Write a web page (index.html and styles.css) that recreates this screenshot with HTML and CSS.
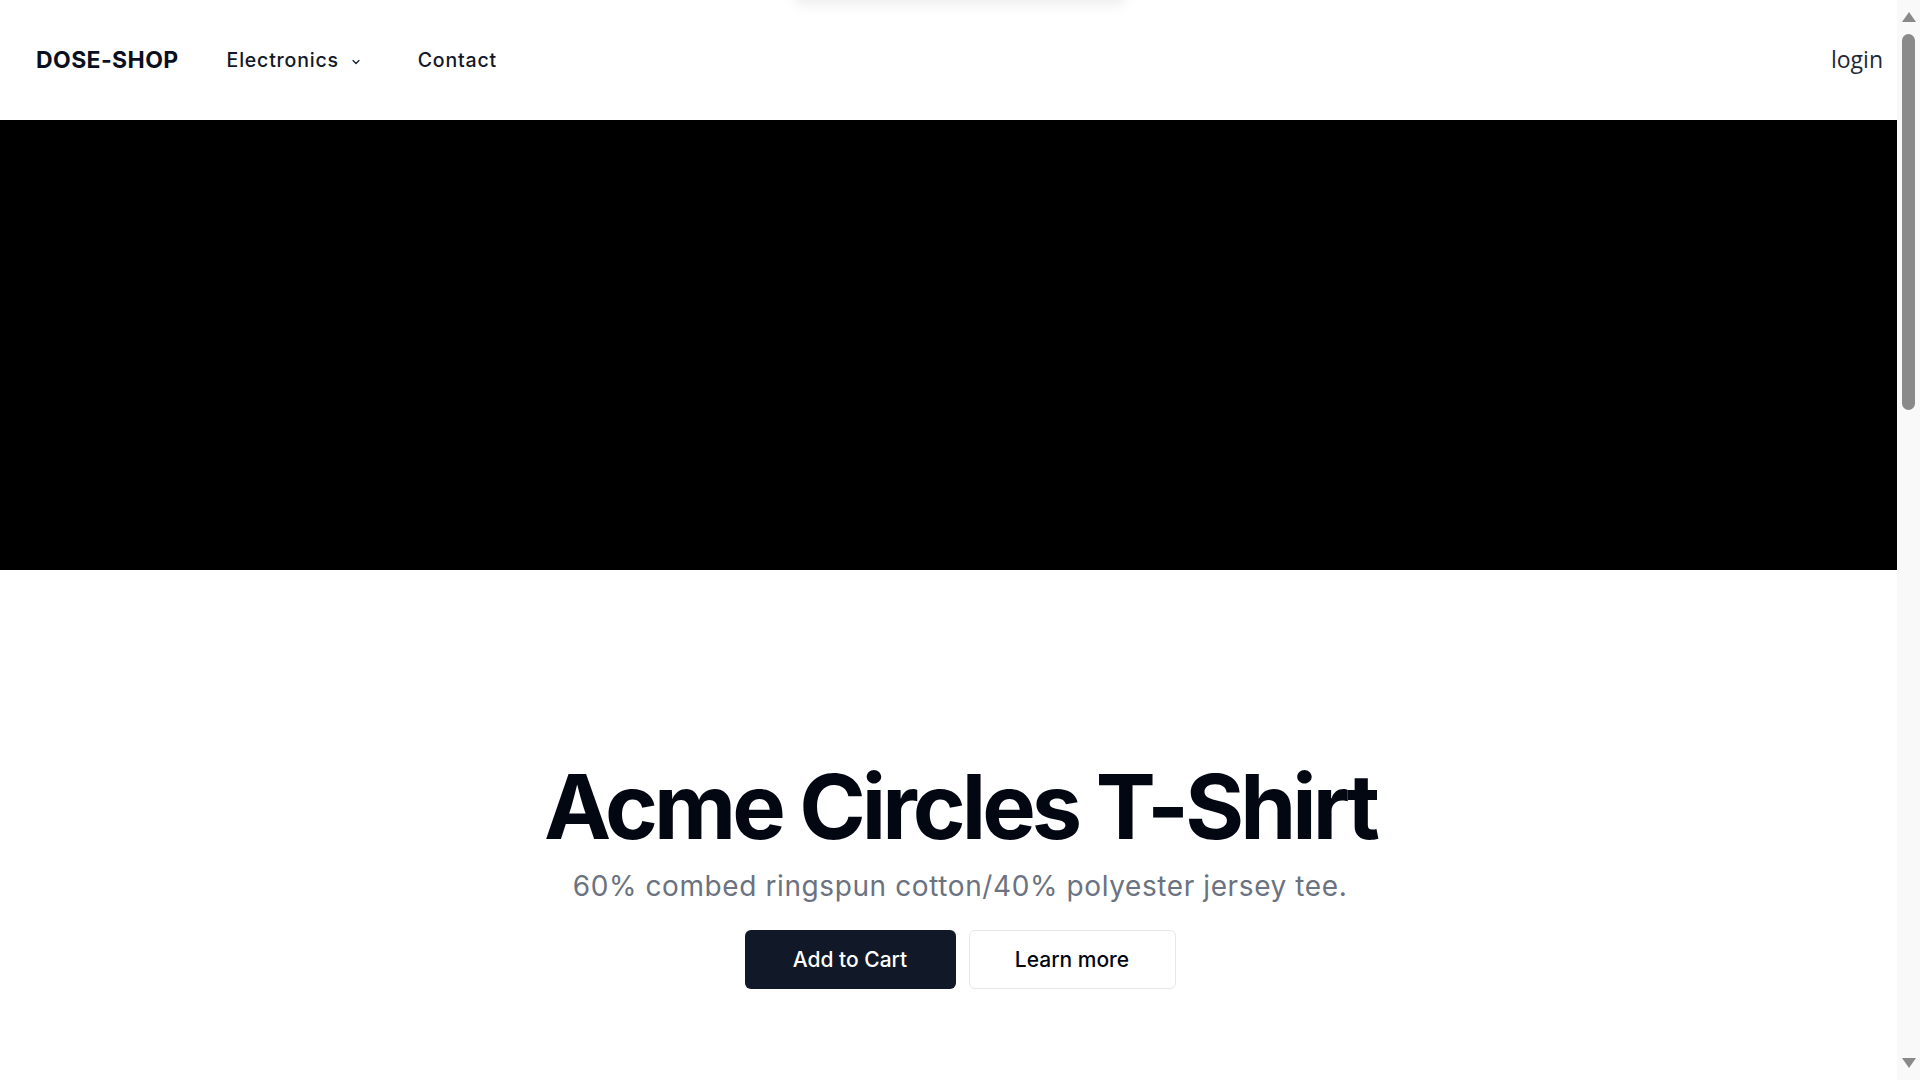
FILE: index.html
```html
<!DOCTYPE html>
<html lang="en">
<head>
<meta charset="utf-8">
<title>DOSE-SHOP</title>
<link rel="stylesheet" href="styles.css">
</head>
<body>
<div class="page">
  <div class="ghost-menu"></div>
  <header class="nav">
    <div class="nav-left">
      <a class="brand" href="#">DOSE-SHOP</a>
      <nav class="links">
        <a class="link" href="#">Electronics
          <svg class="chev" viewBox="0 0 24 24" width="12" height="12" fill="none" stroke="currentColor" stroke-width="2.4" stroke-linecap="round" stroke-linejoin="round"><path d="M6 9l6 6 6-6"/></svg>
        </a>
        <a class="link" href="#">Contact</a>
      </nav>
    </div>
    <a class="login" href="#">login</a>
  </header>
  <section class="hero-media"></section>
  <main class="hero">
    <h1 class="title">Acme Circles T-Shirt</h1>
    <p class="sub">60% combed ringspun cotton/40% polyester jersey tee.</p>
    <div class="actions">
      <a class="btn btn-primary" href="#">Add to Cart</a>
      <a class="btn btn-outline" href="#">Learn more</a>
    </div>
  </main>
</div>
<div class="scrollbar">
  <span class="arrow arrow-up"></span>
  <span class="thumb"></span>
  <span class="arrow arrow-down"></span>
</div>
</body>
</html>
```

FILE: styles.css
```css
* { box-sizing: border-box; }
html, body { margin: 0; padding: 0; overflow: hidden; }
body {
  font-family: Inter, "Liberation Sans", sans-serif;
  color: #030712;
  background: #ffffff;
  height: 1080px;
}
a { color: inherit; text-decoration: none; }
.page { width: 1897px; position: relative; }
.ghost-menu {
  position: absolute;
  left: 795px;
  top: -60px;
  width: 330px;
  height: 60px;
  background: #fff;
  box-shadow: 0 4px 14px rgba(0,0,0,0.08);
  border-radius: 6px;
}
.nav {
  height: 120px;
  display: flex;
  align-items: center;
  justify-content: space-between;
  padding: 0 14px 0 36px;
  background: #fff;
}
.nav-left { display: flex; align-items: center; }
.brand {
  font-weight: 700;
  font-size: 23px;
  letter-spacing: 0.4px;
  color: #0b1020;
}
.links { display: flex; align-items: center; margin-left: 48px; gap: 56px; }
.link {
  display: flex; align-items: center; gap: 11px;
  font-size: 19.5px;
  font-weight: 500;
  letter-spacing: 0.8px;
  color: #111827;
}
.chev { margin-top: 3px; }
.login {
  font-family: "Open Sans", sans-serif;
  font-size: 23px;
  color: #1f2937;
  margin-top: -3px;
}
.hero-media { height: 450px; background: #000; }
.hero {
  display: flex;
  flex-direction: column;
  align-items: center;
  padding-top: 192px;
  padding-left: 23px;
}
.title {
  margin: 0;
  font-size: 90px;
  font-weight: 700;
  letter-spacing: -0.044em;
  line-height: 1;
  color: #030712;
}
.sub {
  margin: 17px 0 0;
  font-size: 28px;
  color: #6b7280;
  letter-spacing: 0.6px;
}
.actions { display: flex; gap: 13px; margin-top: 27px; }
.btn {
  height: 59px;
  display: flex; align-items: center; justify-content: center;
  border-radius: 6px;
  font-size: 21px;
  font-weight: 500;
}
.btn-primary { width: 211px; background: #111827; color: #fff; }
.btn-outline { width: 207px; background: #fff; border: 1px solid #e5e7eb; color: #030712; }
.scrollbar {
  position: fixed;
  top: 0; right: 0;
  width: 23px; height: 1080px;
  background: #f9f9f9;
}
.thumb {
  position: absolute;
  left: 5px; top: 34px;
  width: 13px; height: 376px;
  background: #8a8a8a;
  border-radius: 7px;
}
.arrow {
  position: absolute;
  left: 5px;
  width: 0; height: 0;
  border-left: 7px solid transparent;
  border-right: 7px solid transparent;
}
.arrow-up { top: 12px; border-bottom: 10px solid #8a8a8a; }
.arrow-down { top: 1058px; border-top: 10px solid #8a8a8a; }
```
